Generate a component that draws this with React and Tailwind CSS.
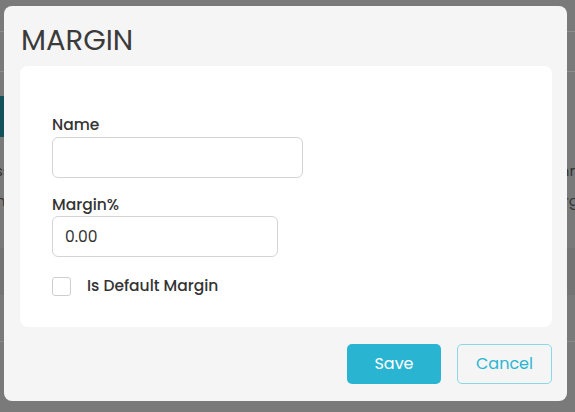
import React from "react";

export default function App() {
  const font = { fontFamily: "Poppins, Inter, 'Noto Sans', sans-serif" };
  return (
    <div
      className="relative w-[575px] h-[412px] overflow-hidden bg-[#7a7a7a]"
      style={font}
    >
      {/* dimmed page behind the modal */}
      <div className="flex flex-col">
        <div className="h-[32px] border-b border-[#8e8e8e]" />
        <div className="h-[40px] border-b border-[#8e8e8e]" />
        <div className="h-[24px]" />
        <div className="h-[41px] w-[200px] bg-[#13525c]" />
        <div className="flex justify-between h-[30px] mt-[18px] items-center text-[15px] text-[#333] leading-none">
          <span className="-ml-[5px]">ss</span>
          <span className="-mr-[4px]">nn</span>
        </div>
        <div className="flex justify-between h-[30px] items-center text-[15px] text-[#333] leading-none">
          <span className="-ml-[4px]">nn</span>
          <span className="-mr-[4px]">rg</span>
        </div>
        <div className="h-[33px]" />
        <div className="h-[47px] bg-[#747474]" />
        <div className="h-[47px] border-b border-[#8a8a8a]" />
      </div>

      {/* modal */}
      <div className="absolute left-[4px] top-[6px] w-[563px] h-[395px] rounded-lg bg-[#f5f5f5] flex flex-col">
        <div className="h-[60px] pl-[17px] pt-[17px]">
          <h2 className="text-[29px] leading-[34px] text-[#3b3b3b] font-normal">
            MARGIN
          </h2>
        </div>
        <div className="ml-[16px] mr-[15px] h-[261px] rounded-lg bg-white pl-[32px] pt-[49px]">
          <label className="block text-[15.5px] leading-[20px] font-medium text-[#333]">
            Name
          </label>
          <div className="mt-[2px] w-[251px] h-[41px] rounded-md border border-[#d4d4d4] bg-white" />
          <label className="block mt-[17px] text-[15.5px] leading-[20px] font-medium text-[#333]">
            Margin%
          </label>
          <div className="mt-[1px] w-[226px] h-[41px] rounded-md border border-[#d4d4d4] bg-white flex items-center pl-[12px] text-[15.5px] text-[#333]">
            0.00
          </div>
          <div className="mt-[19px] flex items-center">
            <div className="w-[19px] h-[19px] rounded-[3px] border border-[#cfcfcf] bg-white" />
            <span className="ml-[16px] text-[15.5px] leading-[20px] font-medium text-[#333]">
              Is Default Margin
            </span>
          </div>
        </div>
        <div className="flex justify-end gap-[16px] mr-[15px] mt-[17px]">
          <button className="w-[94px] h-[40px] rounded-[5px] bg-[#29b5d2] text-white text-[16px]">
            Save
          </button>
          <button className="w-[95px] h-[40px] rounded-[5px] border border-[#8ad7e8] text-[#29b5d2] text-[16px] bg-transparent">
            Cancel
          </button>
        </div>
      </div>
    </div>
  );
}
